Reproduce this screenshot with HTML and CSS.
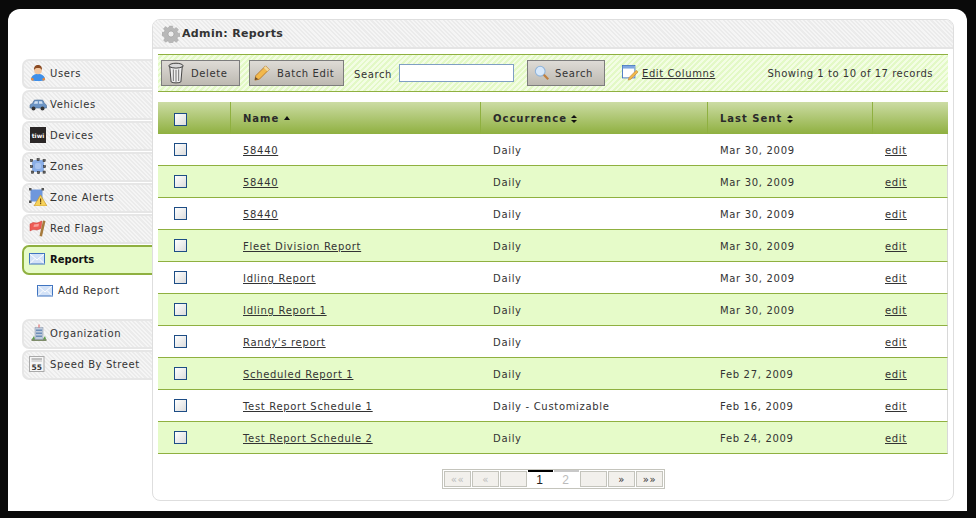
FILE: index.html
```html
<!DOCTYPE html>
<html lang="en">

<head>
    <meta charset="UTF-8">
    <title>Admin: Reports</title>
    <link rel="stylesheet" href="styles.css">
</head>

<body>
    <div class="window">
        <aside class="sidebar">
            <ul class="nav">
                <li><a class="nav-item" href="#users">
                    <svg class="icon" viewBox="0 0 18 18"><path d="M2 15.500c0-3.500 3-5.500 7-5.500s7 2 7 5.500c0 1-3 1.500-7 1.500s-7-.5-7-1.500z" fill="#3f8fe8"/><circle cx="9" cy="6.500" r="3.800" fill="#f2c6a0"/><path d="M5 6.500C4.700 2.500 6.500 1 9 1s4.300 1.500 4 5.500C12.500 4.500 11 4 9 4S5.500 4.500 5 6.500z" fill="#8a4a22"/><path d="M2.500 13.500L1.800 16l2.500 .8.5-2zM15.500 13.500l.7 2.500-2.500 .8-.5-2z" fill="#e8883a"/></svg>
                    Users</a></li>
                <li><a class="nav-item" href="#vehicles">
                    <svg class="icon" viewBox="0 0 18 18"><path d="M1 13v-2.500C1 9 2.500 9 3.500 8.500L5 5.500C5.500 5 7 5 9.500 5s4 0 4.500.5l1.500 3c1 .5 2 1 2 2.500V13z" fill="#6b94c4" stroke="#46688f" stroke-width=".6"/><path d="M6 6.200h2.800v2.600H4.800zM10 6.200h2.800l1 2.600H10z" fill="#cfe0f2"/><circle cx="4.500" cy="13.500" r="2" fill="#333"/><circle cx="13.500" cy="13.500" r="2" fill="#333"/></svg>
                    Vehicles</a></li>
                <li><a class="nav-item" href="#devices">
                    <svg class="icon" viewBox="0 0 18 18"><rect x="1" y="1" width="16" height="16" fill="#2a2626"/><text class="logo-text" x="9" y="11.500">tiwi</text></svg>
                    Devices</a></li>
                <li><a class="nav-item" href="#zones">
                    <svg class="icon" viewBox="0 0 18 18"><rect x="3" y="3" width="12" height="12" rx="3" fill="#8aaee6"/><rect x="6" y="6" width="6" height="6" rx="2" fill="#a9c4ef"/><g fill="#666" stroke="#222" stroke-width=".5"><rect x="1.500" y="2.500" width="2.200" height="2.200"/><rect x="8" y="1.500" width="2.200" height="2.200"/><rect x="14" y="2.500" width="2.200" height="2.200"/><rect x="1.500" y="8.500" width="2.200" height="2.200"/><rect x="14.500" y="8.500" width="2.200" height="2.200"/><rect x="2.500" y="14" width="2.200" height="2.200"/><rect x="8.500" y="14.500" width="2.200" height="2.200"/><rect x="14" y="14" width="2.200" height="2.200"/></g></svg>
                    Zones</a></li>
                <li><a class="nav-item" href="#alerts">
                    <svg class="icon" viewBox="0 0 18 18"><rect x="1.500" y="1.500" width="12" height="12" fill="#6e97dc"/><g fill="#555"><rect x="0" y="0" width="2.500" height="2.500"/><rect x="12.500" y="0" width="2.500" height="2.500"/><rect x="0" y="12.500" width="2.500" height="2.500"/></g><path d="M11.500 7L18 18H5z" fill="#f7d25a" stroke="#c79a2e" stroke-width=".7"/><rect x="11" y="10.500" width="1.200" height="4" fill="#6b4b12"/><rect x="11" y="15" width="1.200" height="1.200" fill="#6b4b12"/></svg>
                    Zone Alerts</a></li>
                <li><a class="nav-item" href="#flags">
                    <svg class="icon" viewBox="0 0 18 18"><path d="M1 5l3-1.500 4 .5 5-2-1 7.500-4 1.500-4-.5-3 1.500z" fill="#ee5b55" stroke="#c93c36" stroke-width=".5"/><path d="M5 5.500l5-.8-.5 2.800-5 .6z" fill="#f7a09a"/><path d="M14 1.500l2.500 .5-3.500 15.500-2.500-.5z" fill="#a67a3c"/></svg>
                    Red Flags</a></li>
                <li><a class="nav-item is-active" href="#reports">
                    <svg class="icon" viewBox="0 0 18 12"><rect x=".5" y=".5" width="15" height="10.500" fill="#d3e2f7" stroke="#3f74c0"/><path d="M1 1l7 6 7-6M1 10.500l5-5M15 10.500l-5-5" fill="none" stroke="#fff"/></svg>
                    Reports</a></li>
                <li><a class="nav-sub" href="#add">
                    <svg class="icon" viewBox="0 0 18 12"><rect x=".5" y=".5" width="15" height="10.500" fill="#d3e2f7" stroke="#3f74c0"/><path d="M1 1l7 6 7-6M1 10.500l5-5M15 10.500l-5-5" fill="none" stroke="#fff"/></svg>
                    Add Report</a></li>
            </ul>
            <ul class="nav nav-lower">
                <li><a class="nav-item" href="#org">
                    <svg class="icon" viewBox="0 0 18 18"><rect x="2.500" y="15" width="15" height="2" fill="#7e8c6a"/><path d="M3 15l2-3 1 3zM14 15l2-3 1 3z" fill="#5da04a"/><rect x="6" y="3.500" width="8" height="12" fill="#bfcbdc" stroke="#8895a8" stroke-width=".5"/><g fill="#6f8fb8"><rect x="7" y="5.500" width="6" height="1.500"/><rect x="7" y="8.500" width="6" height="1.500"/><rect x="7" y="11.500" width="6" height="1.500"/></g><rect x="9.600" y=".5" width=".8" height="3" fill="#d33"/></svg>
                    Organization</a></li>
                <li><a class="nav-item" href="#speed">
                    <svg class="icon" viewBox="0 0 18 18"><rect x=".5" y="1.500" width="14.500" height="15" fill="#f6f6f6" stroke="#aaa"/><rect x="2.500" y="3.500" width="10.500" height="1" fill="#888"/><rect x="2.500" y="5.500" width="10.500" height="1" fill="#bbb"/><text class="sign-text" x="7.700" y="14.500">55</text></svg>
                    Speed By Street</a></li>
            </ul>
        </aside>

        <main class="panel">
            <h1 class="panel-title">
                <svg class="gear" viewBox="0 0 18 18"><path d="M7.500 1h3l.4 2.200 1.500.6 1.900-1.300 2.100 2.100-1.300 1.900.6 1.500 2.200.4v3l-2.200.4-.6 1.500 1.300 1.900-2.100 2.100-1.900-1.300-1.500.6-.4 2.200h-3l-.4-2.200-1.500-.6-1.900 1.300-2.100-2.100 1.300-1.900-.6-1.500L0 10.500v-3l2.200-.4.6-1.500L1.500 3.700 3.600 1.600l1.900 1.300 1.500-.6z" fill="#b8b8b8" stroke="#999" stroke-width=".4"/><circle cx="9" cy="9" r="3" fill="#eee" stroke="#999" stroke-width=".6"/></svg>
                Admin: Reports
            </h1>

            <div class="toolbar">
                <button class="btn btn-delete" type="button">
                    <svg class="btn-icon" viewBox="0 0 18 24"><ellipse cx="9" cy="4" rx="8" ry="3" fill="#d9d9d9" stroke="#333"/><path d="M2 5l1.500 17c2 1.500 9 1.500 11 0L16 5c-3 2-11 2-14 0z" fill="#eee" stroke="#333"/><path d="M6 8v13M9 8.500V22M12 8v13" stroke="#666" fill="none"/></svg>
                    Delete</button>
                <button class="btn btn-batch" type="button">
                    <svg class="btn-icon-sm" viewBox="0 0 18 18"><path d="M13 1l4 4L6 16l-5 1 1-5z" fill="#f2b84b" stroke="#b5782a"/><path d="M1.500 13.500L1 17l4-1z" fill="#6b4b2a"/><path d="M13 1l4 4-2 2-4-4z" fill="#f0d9a0"/></svg>
                    Batch Edit</button>
                <label class="search-label" for="q">Search</label>
                <input class="search-input" id="q" type="text">
                <button class="btn btn-search" type="button">
                    <svg class="btn-icon-sm" viewBox="0 0 18 18"><circle cx="7" cy="7" r="5.500" fill="#d7e8fa" stroke="#8fb3d9" stroke-width="1.200"/><path d="M11 11l5 5" stroke="#c08040" stroke-width="2.500"/></svg>
                    Search</button>
                <a class="edit-cols" href="#cols">
                    <svg class="btn-icon-sm" viewBox="0 0 18 18"><rect x=".5" y=".5" width="14" height="14" fill="#fff" stroke="#3f74c0"/><rect x="1" y="1" width="13" height="3" fill="#7fa7e0"/><path d="M16 6l2 2-8 8-3 1 1-3z" fill="#f2b84b" stroke="#b5782a" stroke-width=".6"/></svg>
                    <span>Edit Columns</span></a>
                <span class="record-count">Showing 1 to 10 of 17 records</span>
            </div>

            <table class="reports">
                <colgroup>
                    <col class="col-check"><col class="col-name"><col class="col-occ"><col class="col-sent"><col class="col-edit">
                </colgroup>
                <thead>
                    <tr>
                        <th><span class="check"></span></th>
                        <th>Name <i class="sort-up"></i></th>
                        <th>Occurrence <i class="sort-both"></i></th>
                        <th>Last Sent <i class="sort-both"></i></th>
                        <th></th>
                    </tr>
                </thead>
                <tbody>
                    <tr><td><span class="check"></span></td><td><a href="#r">58440</a></td><td>Daily</td><td>Mar 30, 2009</td><td><a href="#e">edit</a></td></tr>
                    <tr><td><span class="check"></span></td><td><a href="#r">58440</a></td><td>Daily</td><td>Mar 30, 2009</td><td><a href="#e">edit</a></td></tr>
                    <tr><td><span class="check"></span></td><td><a href="#r">58440</a></td><td>Daily</td><td>Mar 30, 2009</td><td><a href="#e">edit</a></td></tr>
                    <tr><td><span class="check"></span></td><td><a href="#r">Fleet Division Report</a></td><td>Daily</td><td>Mar 30, 2009</td><td><a href="#e">edit</a></td></tr>
                    <tr><td><span class="check"></span></td><td><a href="#r">Idling Report</a></td><td>Daily</td><td>Mar 30, 2009</td><td><a href="#e">edit</a></td></tr>
                    <tr><td><span class="check"></span></td><td><a href="#r">Idling Report 1</a></td><td>Daily</td><td>Mar 30, 2009</td><td><a href="#e">edit</a></td></tr>
                    <tr><td><span class="check"></span></td><td><a href="#r">Randy's report</a></td><td>Daily</td><td></td><td><a href="#e">edit</a></td></tr>
                    <tr><td><span class="check"></span></td><td><a href="#r">Scheduled Report 1</a></td><td>Daily</td><td>Feb 27, 2009</td><td><a href="#e">edit</a></td></tr>
                    <tr><td><span class="check"></span></td><td><a href="#r">Test Report Schedule 1</a></td><td>Daily - Customizable</td><td>Feb 16, 2009</td><td><a href="#e">edit</a></td></tr>
                    <tr><td><span class="check"></span></td><td><a href="#r">Test Report Schedule 2</a></td><td>Daily</td><td>Feb 24, 2009</td><td><a href="#e">edit</a></td></tr>
                </tbody>
            </table>

            <div class="pager-wrap">
                <div class="pager">
                    <span class="pg is-off">&laquo;&laquo;</span>
                    <span class="pg is-off">&laquo;</span>
                    <span class="pg"></span>
                    <span class="pg-num is-current">1</span>
                    <span class="pg-num">2</span>
                    <span class="pg"></span>
                    <span class="pg">&raquo;</span>
                    <span class="pg">&raquo;&raquo;</span>
                </div>
            </div>
        </main>
    </div>
</body>

</html>
```
FILE: styles.css
```css
* {
    margin: 0;
    padding: 0;
    box-sizing: border-box;
}

html,
body {
    height: 100%;
    overflow: hidden;
}

body {
    background-color: #0a0a0a;
    padding: 9px 9px 7px 8px;
    font-family: "DejaVu Sans", Verdana, sans-serif;
    font-size: 10px;
    letter-spacing: 0.6px;
    color: #333;
}

a {
    color: #333;
}

/* window */
.window {
    display: flex;
    height: 502px;
    padding: 10px 13px 10px 14px;
    background-color: #fff;
    border-radius: 12px 12px 0 0;
}

/* left menu */
.sidebar {
    flex: none;
    width: 130px;
    padding-top: 40px;
}

.nav {
    list-style: none;
}

.nav-lower {
    margin-top: 12px;
}

.nav-item {
    display: flex;
    align-items: center;
    gap: 3px;
    height: 30px;
    margin-bottom: 1px;
    padding: 0 0 2px 5px;
    border: 2px solid #e6e6e6;
    border-right: 0;
    border-radius: 7px 0 0 7px;
    background: repeating-linear-gradient(45deg, #f5f5f5 0 1.500px, #ebebeb 1.500px 3px);
    text-decoration: none;
}

.nav-item.is-active {
    border-color: #8fb040;
    background: #e6fbc9;
    font-weight: bold;
    letter-spacing: 0;
    color: #111;
}

.nav-sub {
    display: flex;
    align-items: center;
    gap: 3px;
    height: 31px;
    padding: 0 0 2px 15px;
    text-decoration: none;
}

.icon {
    flex: none;
    width: 18px;
    height: 18px;
}

.logo-text {
    font-size: 6px;
    font-weight: bold;
    letter-spacing: 0;
    text-anchor: middle;
    fill: #fff;
}

.sign-text {
    font-size: 7.500px;
    font-weight: bold;
    letter-spacing: 0;
    text-anchor: middle;
    fill: #333;
}

/* right panel */
.panel {
    flex: 1;
    min-width: 0;
    border: 1px solid #dedede;
    border-radius: 8px;
}

.panel-title {
    display: flex;
    align-items: center;
    gap: 2px;
    height: 29px;
    padding-left: 9px;
    border-bottom: 2px solid #e4e4e4;
    border-radius: 7px 7px 0 0;
    background: repeating-linear-gradient(45deg, #f5f5f5 0 1.500px, #ebebeb 1.500px 3px);
    font-size: 11px;
    letter-spacing: 0.35px;
    color: #333;
}

.gear {
    width: 18px;
    height: 18px;
}

.toolbar {
    display: flex;
    align-items: center;
    height: 38px;
    margin: 5px 5px 0;
    padding-left: 3px;
    border-top: 1px solid #8fb040;
    border-bottom: 1px solid #8fb040;
    background: repeating-linear-gradient(135deg, #f3fde4 0 2px, #e3f9c6 2px 4px);
}

.btn {
    display: flex;
    align-items: center;
    height: 26px;
    border: 1px solid #7d7d7d;
    background: linear-gradient(#dedbd6, #bdb9b1);
    font: inherit;
    letter-spacing: inherit;
    color: #333;
}

.btn-delete {
    width: 79px;
    gap: 7px;
    padding-left: 6px;
}

.btn-batch {
    width: 95px;
    margin-left: 9px;
    gap: 7px;
    padding-left: 4px;
}

.btn-search {
    width: 78px;
    margin-left: 13px;
    gap: 5px;
    padding-left: 6px;
}

.btn-icon {
    width: 16px;
    height: 22px;
}

.btn-icon-sm {
    width: 16px;
    height: 16px;
}

.search-label {
    margin: 2px 0 0 10px;
}

.search-input {
    width: 115px;
    height: 18px;
    margin-left: 7px;
    border: 1px solid #7f9fc4;
    background-color: #fff;
}

.edit-cols {
    display: flex;
    align-items: center;
    gap: 4px;
    margin-left: 17px;
}

.record-count {
    margin-left: auto;
    padding-right: 15px;
    letter-spacing: 0.53px;
}

/* table */
.reports {
    width: 790px;
    margin: 10px 5px 0;
    border-collapse: separate;
    border-spacing: 0;
    table-layout: fixed;
}

.col-check {
    width: 72px;
}

.col-name {
    width: 250px;
}

.col-occ {
    width: 227px;
}

.col-sent {
    width: 165px;
}

.col-edit {
    width: 76px;
}

.reports th {
    height: 32px;
    padding-left: 12px;
    border-left: 1px solid #8fb040;
    background: linear-gradient(#ccdca4, #8fb040);
    text-align: left;
    font-weight: bold;
    letter-spacing: 1px;
    color: #2a2a2a;
}

.reports th:first-child {
    border-left: 0;
}

.reports td {
    height: 32px;
    padding: 2px 0 0 13px;
    border-bottom: 1px solid #8fb040;
    letter-spacing: 0.68px;
}

.reports tbody tr:nth-child(even) td {
    background-color: #e6fbc9;
}

.reports tbody tr td:last-child {
    border-right: 1px solid #d8d8d8;
}

.reports th:first-child,
.reports td:first-child {
    padding-left: 16px;
}

.check {
    display: block;
    width: 13px;
    height: 13px;
    border: 1px solid #1d4d85;
    background: linear-gradient(135deg, #fff, #dcdcdc);
}

.reports th .check {
    margin-top: 2px;
}

.reports td .check {
    margin-top: -3px;
}

.sort-up,
.sort-both {
    display: inline-block;
    position: relative;
    width: 7px;
    height: 8px;
    margin-left: 0;
    vertical-align: -1px;
}

.sort-up::before,
.sort-both::before,
.sort-both::after {
    content: "";
    position: absolute;
    left: 0;
    border-left: 3.500px solid transparent;
    border-right: 3.500px solid transparent;
}

.sort-up::before {
    top: 1px;
    border-bottom: 4px solid #111;
}

.sort-both::before {
    top: 0;
    border-bottom: 3.500px solid #111;
}

.sort-both::after {
    bottom: 0;
    border-top: 3.500px solid #111;
}

/* pager */
.pager-wrap {
    display: flex;
    justify-content: center;
    margin-top: 15px;
    padding-left: 1px;
}

.pager {
    display: flex;
    gap: 1px;
    height: 20px;
    padding: 1px;
    border: 1px solid #c4c4bc;
}

.pg {
    width: 27px;
    border: 1px solid #c4c4bc;
    background-color: #f2f0ec;
    text-align: center;
    line-height: 15px;
    color: #333;
}

.pg.is-off {
    color: #bbb;
}

.pg-num {
    width: 25px;
    margin-top: -1px;
    padding-right: 2px;
    border-top: 2px solid #c8c8c8;
    background-color: #fff;
    text-align: center;
    font-family: "Liberation Sans", Arial, sans-serif;
    font-size: 12px;
    letter-spacing: 0;
    line-height: 16px;
    color: #bbb;
}

.pg-num.is-current {
    border-top-color: #000;
    color: #222;
}
```
